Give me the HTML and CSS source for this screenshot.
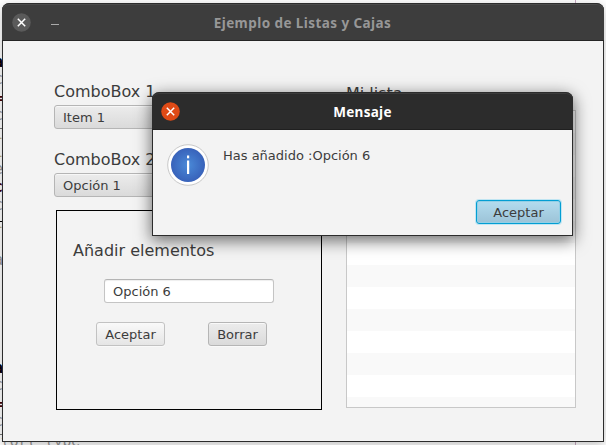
FILE: index.html
```html
<!DOCTYPE html>
<html lang="es">
<head>
<meta charset="utf-8">
<title>Ejemplo de Listas y Cajas</title>
<link rel="stylesheet" href="styles.css">
</head>
<body>
<div class="desktop">
  <div class="editor">
    <b class="line l1">a</b><span class="line l2">c</span><b class="line l3 red">=</b>
    <span class="line l4">c</span><i class="rule r1"></i><span class="line l5 gold">l</span>
    <span class="line l6 gold">l</span><span class="line l7">e</span><b class="line l8 red">c</b>
    <span class="line l9">c</span><i class="rule r2"></i><span class="line l10 gold">l</span>
    <span class="line l11">a</span><b class="line l12">a</b><span class="line l13">c</span>
    <b class="line l14 red">=</b><span class="line l15">c</span><i class="rule r3"></i>
    <span class="line l16">tort type</span>
    <i class="margin-line"></i>
  </div>

  <section class="window main">
    <header class="titlebar">
      <svg class="close" viewBox="0 0 19 19"><circle cx="9.5" cy="9.5" r="9.3" fill="#5a5a5a"/><path d="M5.8 5.8l7.4 7.4M13.2 5.8l-7.4 7.4" stroke="#fff" stroke-width="1.5"/></svg>
      <i class="minimize"></i>
      <h1>Ejemplo de Listas y Cajas</h1>
    </header>
    <div class="content">
      <div class="left">
        <label class="label">ComboBox 1</label>
        <div class="combo">Item 1</div>
        <label class="label second">ComboBox 2</label>
        <div class="combo">Opción 1</div>
        <div class="panel">
          <label class="label">Añadir elementos</label>
          <div class="field">Opción 6</div>
          <div class="actions">
            <button class="button light">Aceptar</button>
            <button class="button erase">Borrar</button>
          </div>
        </div>
      </div>
      <div class="right">
        <label class="label">Mi lista</label>
        <div class="list"></div>
      </div>
    </div>
  </section>

  <section class="window dialog">
    <header class="titlebar">
      <svg class="close" viewBox="0 0 19 19"><circle cx="9.5" cy="9.5" r="9.3" fill="#df4a16"/><path d="M5.8 5.8l7.4 7.4M13.2 5.8l-7.4 7.4" stroke="#fff" stroke-width="1.5"/></svg>
      <h2>Mensaje</h2>
    </header>
    <div class="message">
      <svg class="info" viewBox="0 0 42 42">
        <defs><radialGradient id="blue"><stop offset="0" stop-color="#4a8ad8"/><stop offset="1" stop-color="#3862ba"/></radialGradient></defs>
        <circle cx="21" cy="21" r="20.3" fill="#fff" stroke="#c8c8c8"/>
        <circle cx="21" cy="21" r="17" fill="url(#blue)"/>
        <rect x="20" y="16.5" width="2.2" height="13.5" fill="#fff"/>
        <rect x="20" y="11.5" width="2.2" height="2.8" fill="#fff"/>
      </svg>
      <p>Has añadido :Opción 6</p>
    </div>
    <footer><button class="button default">Aceptar</button></footer>
  </section>
</div>
</body>
</html>
```
FILE: styles.css
```css
* { box-sizing: border-box; }
body {
  margin: 0;
  font: 13px/22px "DejaVu Sans", sans-serif;
  color: #3c3c3c;
}
.desktop {
  position: relative;
  width: 606px;
  height: 445px;
  overflow: hidden;
  background: #fff;
}

/* editor behind the windows */
.editor { font: 15px/18px "DejaVu Sans Mono", monospace; color: #999; }
.line { position: absolute; left: -6px; height: 18px; }
b.line { color: #000; }
.line.red { color: #400; }
.line.gold { color: #c8b478; }
.l1 { top: 53px; } .l2 { top: 70px; } .l3 { top: 89px; } .l4 { top: 106px; }
.l5 { top: 125px; } .l6 { top: 143px; } .l7 { top: 160px; } .l8 { top: 178px; }
.l9 { top: 196px; } .l10 { top: 214px; } .l11 { top: 251px; } .l12 { top: 359px; }
.l13 { top: 376px; } .l14 { top: 395px; } .l15 { top: 412px; }
.l16 { top: 432px; left: 1px; font-size: 14.6px; white-space: pre; }
.rule { position: absolute; left: 0; width: 2px; height: 1px; background: #777; }
.r1 { top: 128px; } .r2 { top: 221px; background: #000; } .r3 { top: 434px; }
.margin-line { position: absolute; left: 575px; top: 0; width: 1px; height: 445px; background: #c9a9c4; }

.window {
  position: absolute;
  display: flex;
  flex-direction: column;
  border: 1px solid #2c2c2c;
  border-top: 0;
  border-radius: 8px 8px 0 0;
  background: #f3f3f3;
}
.main {
  left: 2px;
  top: 3px;
  width: 602px;
  height: 439px;
  box-shadow: 0 3px 12px rgba(0, 0, 0, .25);
}
.dialog {
  left: 152px;
  top: 92px;
  width: 421px;
  height: 144px;
  box-shadow: 0 4px 16px 1px rgba(0, 0, 0, .55);
}
.titlebar {
  display: flex;
  align-items: center;
  flex: none;
  height: 38px;
  margin: 0 -1px;
  padding-left: 9px;
  border-radius: 7px 7px 0 0;
  border-top: 1px solid #2c2c2c;
  border-bottom: 1px solid #242424;
  background: #3d3d3d;
  box-shadow: inset 0 1px #4b4b4b;
}
.dialog .titlebar { background: #2c2c2c; box-shadow: inset 0 1px #3c3c3c; border-bottom-color: #202020; }
.close { width: 19px; height: 19px; flex: none; }
.main .close { margin-left: 1px; }
.minimize { width: 8px; height: 1px; margin: 4px 0 0 20px; background: #aaa; }
.titlebar h1, .titlebar h2 {
  flex: 1;
  margin: 0;
  padding-top: 2px;
  font: bold 13.5px/20px "Noto Sans", sans-serif;
  text-align: center;
}
.titlebar h1 { margin-right: 58px; color: #979797; letter-spacing: .43px; }
.titlebar h2 { margin-right: 28px; color: #fff; letter-spacing: .3px; }

.content { display: flex; flex: 1; padding: 41px 27px 0 51px; }
.left { display: flex; flex-direction: column; width: 268px; }
.right { display: flex; flex-direction: column; width: 230px; margin-left: 24px; padding-top: 2px; }
.label { display: block; height: 20px; font-size: 16px; line-height: 20px; white-space: nowrap; }
.second { margin-top: 21px; }
.combo {
  width: 150px;
  height: 24px;
  margin-top: 3px;
  padding: 1px 0 0 8px;
  border: 1px solid #b5b5b5;
  border-radius: 3px;
  background: linear-gradient(#ececec, #dadada);
  box-shadow: inset 0 1px #f7f7f7;
}
.panel {
  width: 266px;
  height: 200px;
  margin: 13px 0 0 2px;
  padding: 30px 0 0 16px;
  border: 1px solid #000;
}
.field {
  width: 170px;
  height: 24px;
  margin: 18px 0 0 31px;
  padding: 1px 0 0 8px;
  border: 1px solid #c4c4c4;
  border-top-color: #b4b4b4;
  border-radius: 3px;
  background: #fff;
  box-shadow: inset 0 1px 1px #eee;
}
.actions { display: flex; gap: 43px; margin: 19px 0 0 23px; }
.button {
  height: 24px;
  padding: 2px 0 0;
  border: 1px solid #b5b5b5;
  border-radius: 3px;
  background: linear-gradient(#ececec, #dadada);
  box-shadow: inset 0 1px #f9f9f9, 0 1px #f9f9f9;
  color: #3c3c3c;
  font: 13px/20px "DejaVu Sans", sans-serif;
}
.light { width: 69px; background: linear-gradient(#f9f9f9, #e5e5e5); border-color: #c2c2c2; }
.erase { width: 59px; }
.list {
  height: 298px;
  margin-top: 6px;
  border: 1px solid #c8c8c8;
  background: repeating-linear-gradient(#fff 0 22px, #f9f9f9 22px 44px);
}

.message { display: flex; padding: 14px 0 0 14px; }
.info { width: 42px; height: 42px; }
.message p { margin: 1px 0 0 14px; }
.dialog footer { display: flex; justify-content: flex-end; margin: 14px 11px 0 0; }
.default {
  width: 85px;
  border-color: #039ed3;
  background: linear-gradient(#b3dcef, #9cc3d7);
  box-shadow: inset 0 0 0 1px #94cfe5, 0 0 0 1px #c0e5f2;
}
```
